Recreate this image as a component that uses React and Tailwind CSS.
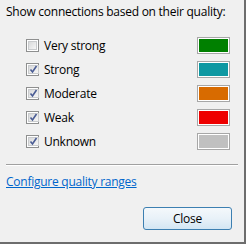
import { useState } from 'react';

const QUALITIES = [
  { label: 'Very strong', color: 'bg-[#008000]', checked: false },
  { label: 'Strong', color: 'bg-[#0e98a2]', checked: true },
  { label: 'Moderate', color: 'bg-[#d86b00]', checked: true },
  { label: 'Weak', color: 'bg-[#ee0000]', checked: true },
  { label: 'Unknown', color: 'bg-[#c0c0c0]', checked: true },
];

function Checkbox({ checked, onToggle }) {
  return (
    <button
      onClick={onToggle}
      className="w-[13px] h-[13px] border border-[#8e8f8f] bg-white p-[1px] flex"
    >
      <span className="flex-1 border border-[#c9cbcd] bg-gradient-to-br from-[#d9dadb] to-[#f6f6f6] flex items-center justify-center">
        {checked && (
          <svg width="9" height="9" viewBox="0 0 9 9">
            <path d="M1.5 4.5 L3.5 7 L7.5 1" fill="none" stroke="#4a5c94" strokeWidth="1.6" />
          </svg>
        )}
      </span>
    </button>
  );
}

export default function App() {
  const [rows, setRows] = useState(QUALITIES);

  const toggle = (i) =>
    setRows(rows.map((r, j) => (j === i ? { ...r, checked: !r.checked } : r)));

  return (
    <div
      className="w-[246px] h-[244px] bg-[#f0f0f0] border-r-2 border-b-2 border-[#6d6d6d] text-[12px] tracking-[-0.25px] text-black flex flex-col"
      style={{ fontFamily: '"Segoe UI", "Open Sans", sans-serif' }}
    >
      <div className="pl-[6px] pt-[4px] leading-[16px]">Show connections based on their quality:</div>

      {/* 품질 목록 */}
      <div className="flex flex-col gap-[7px] mt-[17px] pl-[26px] pr-[14px]">
        {rows.map((r, i) => (
          <div key={r.label} className="flex items-center h-[17px]">
            <Checkbox checked={r.checked} onToggle={() => toggle(i)} />
            <span className="ml-[5px] flex-1 leading-[16px]">{r.label}</span>
            <span className="w-[33px] h-[17px] border border-[#a7a7a7] bg-white p-[1px] flex">
              <span className={`flex-1 ${r.color}`} />
            </span>
          </div>
        ))}
      </div>

      <div className="mx-[6px] mt-[14px] h-[2px] border-t border-[#a0a0a0] border-b border-b-white" />

      <a href="#" className="ml-[6px] mt-[8px] self-start text-[#0066cc] underline leading-[16px]">
        Configure quality ranges
      </a>

      <div className="flex justify-end pr-[12px] mt-[17px]">
        <button className="w-[89px] h-[23px] rounded-[3px] border border-[#3c7fb1] bg-gradient-to-b from-[#f4f8fb] via-[#e8f1f8] to-[#d3e6f3] leading-[16px]">
          Close
        </button>
      </div>
    </div>
  );
}
